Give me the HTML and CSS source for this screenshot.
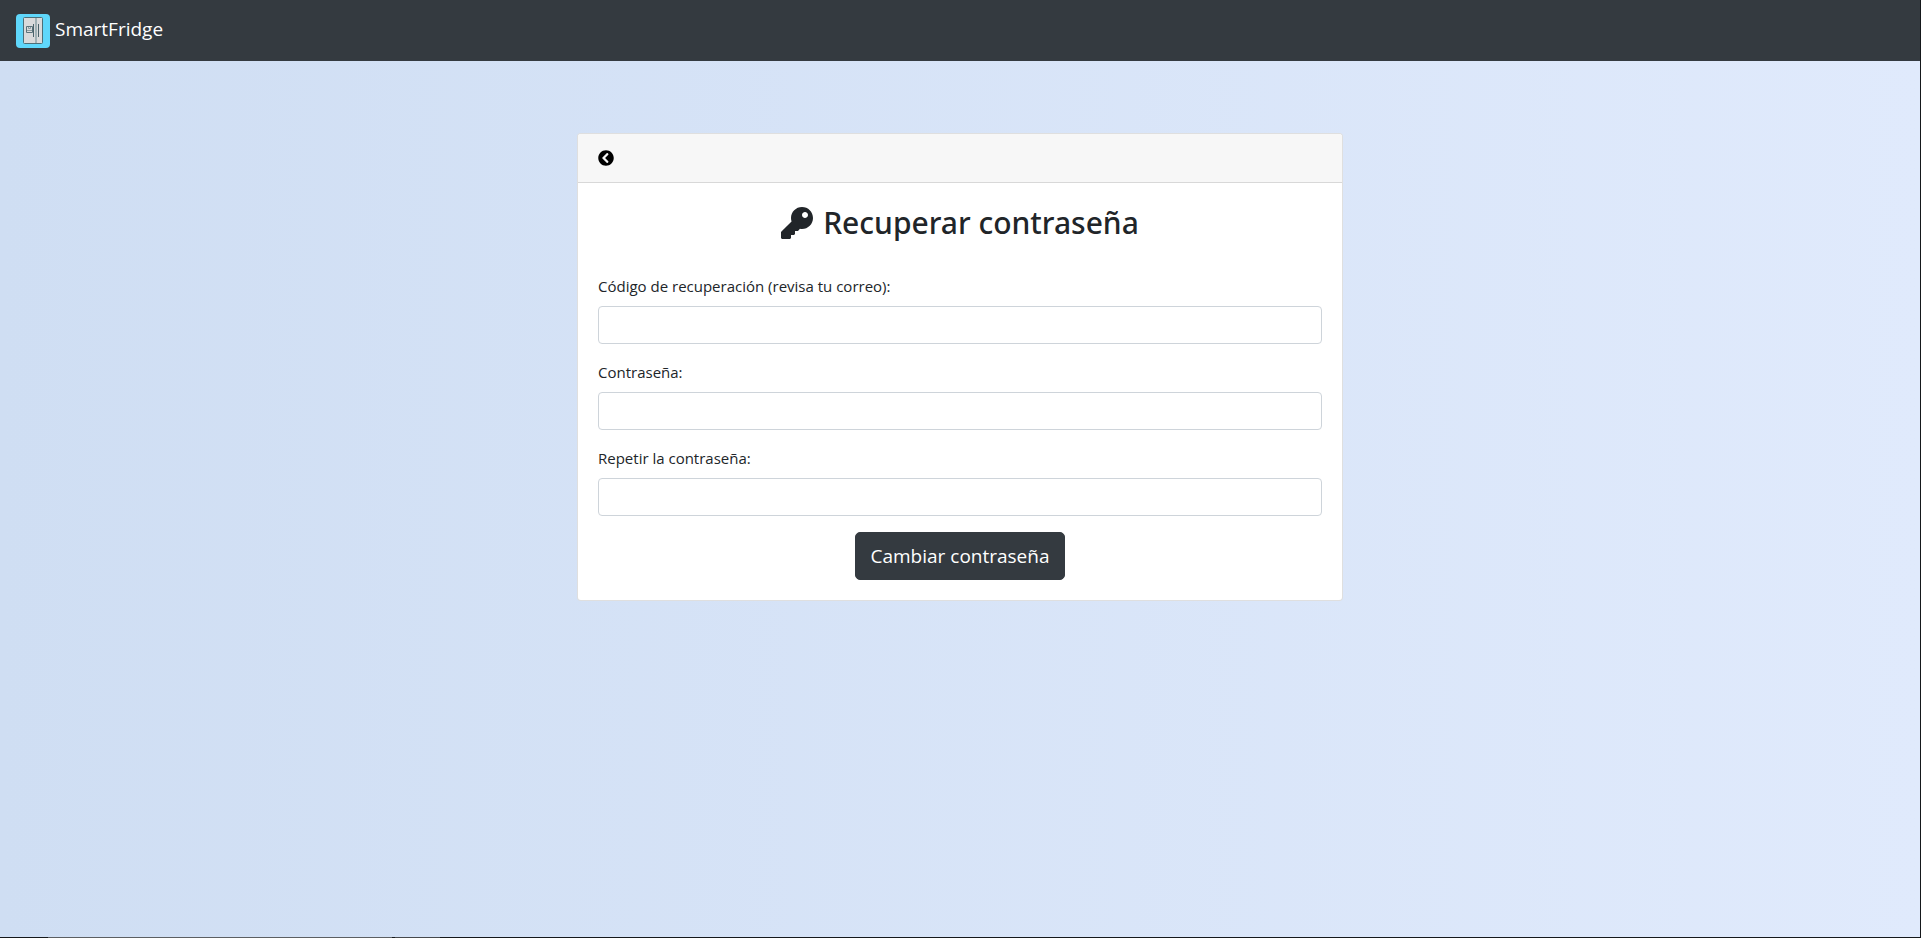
FILE: index.html
```html
<!DOCTYPE html>
<html lang="es">
<head>
<meta charset="utf-8">
<meta name="viewport" content="width=device-width, initial-scale=1">
<title>SmartFridge</title>
<link rel="stylesheet" href="styles.css">
</head>
<body>
<div class="page">
<header class="navbar">
  <a class="brand" href="#">
    <svg class="brand-logo" viewBox="0 0 34 34" aria-hidden="true">
      <rect width="34" height="34" rx="4" fill="#5fd7fb"/>
      <rect x="7.5" y="3.5" width="19" height="26" rx="1" fill="#d9dadb" stroke="#4c6f78"/>
      <rect x="19" y="4" width="2" height="25" fill="#9fb0b4"/>
      <path d="M17.500 10v13M22.500 10v13" stroke="#4a626a" fill="none"/>
      <path d="M10.500 12.500h6v6h-6z" stroke="#5a727a" fill="#d9dadb"/>
      <path d="M12.500 13v1.500h2V13M11 16.500h5" stroke="#8a9ba0" fill="none"/>
    </svg>
    <span class="brand-name">SmartFridge</span>
  </a>
</header>
<main class="content">
  <section class="card">
    <div class="card-header">
      <a class="back" href="#" aria-label="Volver">
        <svg viewBox="0 0 512 512" fill="currentColor" aria-hidden="true"><path d="M256 504C119 504 8 393 8 256S119 8 256 8s248 111 248 248-111 248-248 248zM142.100 273l135.500 135.500c9.400 9.400 24.600 9.400 33.900 0l17-17c9.400-9.400 9.400-24.600 0-33.900L226.900 256l101.600-101.600c9.400-9.400 9.400-24.600 0-33.900l-17-17c-9.400-9.400-24.600-9.400-33.900 0L142.100 239c-9.400 9.400-9.400 24.600 0 34z"/></svg>
      </a>
    </div>
    <form class="card-body">
      <h1 class="title">
        <svg class="key" viewBox="0 0 512 512" fill="currentColor" aria-hidden="true"><path d="M512 176.001C512 273.203 433.202 352 336 352c-11.220 0-22.190-1.062-32.827-3.069l-24.012 27.014A23.999 23.999 0 0 1 261.223 384H224v40c0 13.255-10.745 24-24 24h-40v40c0 13.255-10.745 24-24 24H24c-13.255 0-24-10.745-24-24v-78.059c0-6.365 2.529-12.470 7.029-16.971l161.802-161.802C163.108 213.814 160 195.271 160 176 160 78.798 238.797.001 335.999 0 433.488-.001 512 78.511 512 176.001zM336 128c0 26.510 21.490 48 48 48s48-21.490 48-48-21.490-48-48-48-48 21.490-48 48z"/></svg>
        <span>Recuperar contraseña</span>
      </h1>
      <div class="field">
        <label for="code">Código de recuperación (revisa tu correo):</label>
        <input id="code" type="text">
      </div>
      <div class="field">
        <label for="password">Contraseña:</label>
        <input id="password" type="password">
      </div>
      <div class="field">
        <label for="repeat">Repetir la contraseña:</label>
        <input id="repeat" type="password">
      </div>
      <button class="submit" type="submit">Cambiar contraseña</button>
    </form>
  </section>
</main>
</div>
<div class="edge"></div>
</body>
</html>
```
FILE: styles.css
```css
*, *::before, *::after {
  box-sizing: border-box;
}

body {
  margin: 0;
  min-height: 100vh;
  display: flex;
  flex-direction: column;
  font-family: "Segoe UI", "Open Sans", "Noto Sans", sans-serif;
  font-size: 15px;
  line-height: 24px;
  color: #212529;
}

.page {
  flex: 1;
  border-right: 1px solid #15181b;
  background: linear-gradient(to right, #cfdef3, #e0eafc);
}

.edge {
  height: 1px;
  background: linear-gradient(to right, #15181b 48px, #5c5f62 48px 392px, #15181b 392px 395px, #46494c 395px 440px, #15181b 440px);
}

.navbar {
  display: flex;
  padding: 8px 16px;
  background: #343a40;
}

.brand {
  display: flex;
  align-items: center;
  gap: 5px;
  height: 45px;
  color: #fff;
  font-size: 19px;
  text-decoration: none;
}

.brand-logo {
  width: 34px;
  height: 34px;
}

.brand-name {
  padding-bottom: 4px;
}

.content {
  padding: 72px 16px;
}

.card {
  max-width: 766px;
  margin: 0 auto;
  border: 1px solid rgba(0, 0, 0, 0.125);
  border-radius: 4px;
  background: #fff;
}

.card-header {
  padding: 12px 20px;
  border-bottom: 1px solid #d8d8d8;
  border-radius: 3px 3px 0 0;
  background: #f7f7f7;
}

.back {
  display: flex;
  align-items: center;
  width: 16px;
  height: 24px;
  color: #000;
}

.back svg {
  width: 16px;
  height: 16px;
}

.card-body {
  display: flex;
  flex-direction: column;
  gap: 16px;
  padding: 20px;
}

.title {
  display: flex;
  justify-content: center;
  align-items: center;
  gap: 10px;
  margin: 0 0 15px;
  font-family: "Segoe UI", "Noto Sans", sans-serif;
  font-size: 30px;
  font-weight: 500;
  line-height: 40px;
}

.key {
  width: 32px;
  height: 32px;
}

.field {
  display: flex;
  flex-direction: column;
  gap: 8px;
}

.field input {
  width: 100%;
  height: 38px;
  padding: 6px 12px;
  border: 1px solid #ced4da;
  border-radius: 4px;
  background: #fff;
  font: inherit;
}

.submit {
  align-self: center;
  padding: 8px 14px;
  border: 1px solid #343a40;
  border-radius: 5px;
  background: #343a40;
  color: #fff;
  font-family: inherit;
  font-size: 19px;
  line-height: 30px;
}
```
